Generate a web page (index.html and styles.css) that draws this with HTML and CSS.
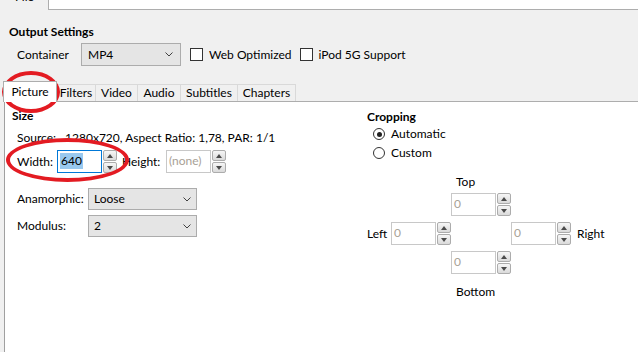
FILE: index.html
```html
<!DOCTYPE html>
<html lang="en">
<head>
  <meta charset="UTF-8">
  <title>Output Settings</title>
  <link rel="stylesheet" href="styles.css">
</head>
<body>

  <div class="window">

    <div class="file-row">
      <span class="file-label">File</span>
      <div class="file-box"></div>
    </div>

    <section class="output">
      <h2 class="section-title">Output Settings</h2>
      <div class="container-row">
        <span class="container-label">Container</span>
        <div class="select select-container">
          <span>MP4</span>
          <svg class="chevron" width="8" height="5" viewBox="0 0 8 5"><polyline points="0.5,0.5 4,4 7.5,0.5" fill="none" stroke="#404040" stroke-width="1"/></svg>
        </div>
        <label class="check"><span class="box"></span>Web Optimized</label>
        <label class="check"><span class="box"></span>iPod 5G Support</label>
      </div>
    </section>

    <div class="tabs">
      <div class="tab tab-picture active">Picture</div>
      <div class="tab tab-filters">Filters</div>
      <div class="tab tab-video">Video</div>
      <div class="tab tab-audio">Audio</div>
      <div class="tab tab-subtitles">Subtitles</div>
      <div class="tab tab-chapters">Chapters</div>
    </div>

    <div class="tab-page">

      <div class="col-size">
        <h3 class="group-title">Size</h3>
        <div class="source">Source:<span class="source-value">1280x720, Aspect Ratio: 1,78, PAR: 1/1</span></div>

        <div class="dim-row">
          <span class="dim-label width-label">Width:</span>
          <div class="spin">
            <div class="spin-field focused"><span class="selected">640</span></div>
            <div class="spin-btns">
              <span class="spin-btn up"></span>
              <span class="spin-btn down"></span>
            </div>
          </div>
          <span class="dim-label height-label">Height:</span>
          <div class="spin">
            <div class="spin-field disabled">(none)</div>
            <div class="spin-btns">
              <span class="spin-btn up"></span>
              <span class="spin-btn down"></span>
            </div>
          </div>
        </div>

        <div class="form-row first">
          <span class="form-label">Anamorphic:</span>
          <div class="select select-wide">
            <span>Loose</span>
            <svg class="chevron" width="8" height="5" viewBox="0 0 8 5"><polyline points="0.5,0.5 4,4 7.5,0.5" fill="none" stroke="#404040" stroke-width="1"/></svg>
          </div>
        </div>
        <div class="form-row">
          <span class="form-label">Modulus:</span>
          <div class="select select-wide">
            <span>2</span>
            <svg class="chevron" width="8" height="5" viewBox="0 0 8 5"><polyline points="0.5,0.5 4,4 7.5,0.5" fill="none" stroke="#404040" stroke-width="1"/></svg>
          </div>
        </div>
      </div>

      <div class="col-crop">
        <h3 class="group-title crop-title">Cropping</h3>
        <label class="radio-row"><span class="radio checked"></span>Automatic</label>
        <label class="radio-row"><span class="radio"></span>Custom</label>

        <div class="crop-grid">
          <span class="crop-label top-label">Top</span>

          <div class="spin crop-top">
            <div class="spin-field disabled">0</div>
            <div class="spin-btns"><span class="spin-btn up"></span><span class="spin-btn down"></span></div>
          </div>

          <span class="crop-side left-label">Left</span>
          <div class="spin crop-left">
            <div class="spin-field disabled">0</div>
            <div class="spin-btns"><span class="spin-btn up"></span><span class="spin-btn down"></span></div>
          </div>
          <div class="spin crop-right">
            <div class="spin-field disabled">0</div>
            <div class="spin-btns"><span class="spin-btn up"></span><span class="spin-btn down"></span></div>
          </div>
          <span class="crop-side right-label">Right</span>

          <div class="spin crop-bottom">
            <div class="spin-field disabled">0</div>
            <div class="spin-btns"><span class="spin-btn up"></span><span class="spin-btn down"></span></div>
          </div>

          <span class="crop-label bottom-label">Bottom</span>
        </div>
      </div>

    </div>

    <!-- red marks drawn over the screenshot -->
    <div class="mark mark-tab"></div>
    <div class="mark mark-width"></div>

  </div>

</body>
</html>
```

FILE: styles.css
```css
* {
  box-sizing: border-box;
}

body {
  margin: 0;
  font-family: "Segoe UI", Lato, "Noto Sans", sans-serif;
  font-size: 12px;
  line-height: 16px;
  color: #000;
}

.window {
  position: relative;
  width: 638px;
  height: 352px;
  overflow: hidden;
  background: #f0f0f0;
}

/* top strip */
.file-row {
  display: flex;
  height: 10px;
  overflow: hidden;
}

.file-label {
  padding-left: 15px;
  width: 48px;
  margin-top: -11px;
}

.file-box {
  flex: 1;
  height: 10px;
  background: #fff;
  border-left: 1px solid #adadad;
  border-bottom: 1px solid #adadad;
}

/* output settings */
.output {
  padding-left: 9px;
}

.section-title {
  margin: 14px 0 0;
  font-size: 12px;
  font-weight: bold;
  line-height: 16px;
}

.container-row {
  display: flex;
  align-items: center;
  margin-top: 3px;
  padding-left: 8px;
}

.container-label {
  width: 64px;
}

.select {
  display: flex;
  align-items: center;
  justify-content: space-between;
  background: #e5e5e5;
  border: 1px solid #acacac;
}

.select-container {
  width: 100px;
  height: 23px;
  padding: 0 7px 0 6px;
}

.select-wide {
  width: 109px;
  height: 22px;
  padding: 0 5px 0 5px;
}

.chevron {
  display: block;
}

.check {
  display: flex;
  align-items: center;
  gap: 6px;
  margin-left: 9px;
}

.check + .check {
  margin-left: 8px;
}

.box {
  width: 13px;
  height: 13px;
  background: #fff;
  border: 1px solid #333;
}

/* tabs */
.tabs {
  display: flex;
  align-items: flex-end;
  height: 21px;
  margin-top: 14px;
  padding-left: 3px;
}

.tab {
  height: 17px;
  text-align: center;
  line-height: 15px;
  background: #f0f0f0;
  border: 1px solid #d9d9d9;
  border-bottom: none;
  border-left: none;
}

.tab.active {
  height: 21px;
  margin-bottom: -1px;
  position: relative;
  z-index: 1;
  padding-top: 2px;
  background: #fff;
  border: 1px solid #adadad;
  border-bottom: none;
}

.tab-picture { width: 54px; }
.tab-filters { width: 39px; }
.tab-video { width: 42px; }
.tab-audio { width: 43px; }
.tab-subtitles { width: 57px; }
.tab-chapters { width: 58px; }

/* tab page */
.tab-page {
  display: flex;
  height: 252px;
  margin-left: 4px;
  padding: 6px 0 0 7px;
  background: #fff;
  border-left: 1px solid #a0a0a0;
  border-top: 1px solid #adadad;
}

.col-size {
  width: 355px;
}

.group-title {
  margin: 0;
  font-size: 12px;
  font-weight: bold;
  line-height: 16px;
}

.source {
  margin-top: 6px;
  padding-left: 5px;
}

.source-value {
  margin-left: 9px;
}

.dim-row {
  display: flex;
  align-items: center;
  margin-top: 4px;
  padding-left: 5px;
}

.width-label {
  width: 40px;
}

.height-label {
  width: 44px;
  margin-left: 5px;
}

/* spin boxes */
.spin {
  display: flex;
  gap: 1px;
  height: 23px;
}

.spin-field {
  width: 45px;
  height: 23px;
  padding: 2px 2px 0;
  background: #fff;
  border: 1px solid #abadb3;
}

.spin-field.focused {
  border-color: #0078d7;
}

.spin-field.disabled {
  color: #a8a196;
  border-color: #c8c8c8;
}

.selected {
  display: inline-block;
  padding: 0 1px;
  background: #99c9ef;
}

.spin-btns {
  display: flex;
  flex-direction: column;
  gap: 1px;
  width: 14px;
}

.spin-btn {
  position: relative;
  flex: 1;
  background: linear-gradient(#f6f6f6, #dadada);
  border: 1px solid #acacac;
  border-radius: 2px;
}

.spin-btn::after {
  content: "";
  position: absolute;
  left: 3px;
  top: 3px;
  border-left: 3.5px solid transparent;
  border-right: 3.5px solid transparent;
}

.spin-btn.up::after {
  border-bottom: 4px solid #4a4a4a;
}

.spin-btn.down::after {
  border-top: 4px solid #4a4a4a;
}

.form-row {
  display: flex;
  align-items: center;
  margin-top: 5px;
  padding-left: 5px;
}

.form-row.first {
  margin-top: 15px;
}

.form-label {
  width: 71px;
}

/* cropping */
.col-crop {
  flex: 1;
}

.crop-title {
  margin-top: 1px;
}

.radio-row {
  display: flex;
  align-items: center;
  gap: 6px;
  height: 16px;
  margin-top: 1px;
  padding-left: 6px;
}

.radio-row + .radio-row {
  margin-top: 3px;
}

.radio {
  position: relative;
  width: 12px;
  height: 12px;
  border: 1px solid #333;
  border-radius: 50%;
  background: #fff;
}

.radio.checked::after {
  content: "";
  position: absolute;
  left: 2.5px;
  top: 2.5px;
  width: 5px;
  height: 5px;
  border-radius: 50%;
  background: #222;
}

.crop-grid {
  display: grid;
  grid-template-columns: 24px 60px 60px 60px auto;
  grid-template-rows: 19px 29px 29px 33px 16px;
  align-items: start;
  margin-top: 13px;
}

.crop-label {
  grid-column: 3;
  padding-left: 5px;
}

.top-label { grid-row: 1; }
.crop-top { grid-row: 2; grid-column: 3; }

.crop-side {
  grid-row: 3;
  margin-top: 4px;
}

.left-label { grid-column: 1; }
.crop-left { grid-row: 3; grid-column: 2; }
.crop-right { grid-row: 3; grid-column: 4; }
.right-label { grid-column: 5; padding-left: 6px; }

.crop-bottom { grid-row: 4; grid-column: 3; }
.bottom-label { grid-row: 5; }

/* red annotation rings */
.mark {
  position: absolute;
  border: 4px solid #e31b22;
  border-radius: 50%;
}

.mark-tab {
  left: 2px;
  top: 71px;
  width: 58px;
  height: 42px;
}

.mark-width {
  left: 6px;
  top: 138px;
  width: 123px;
  height: 44px;
}
```
